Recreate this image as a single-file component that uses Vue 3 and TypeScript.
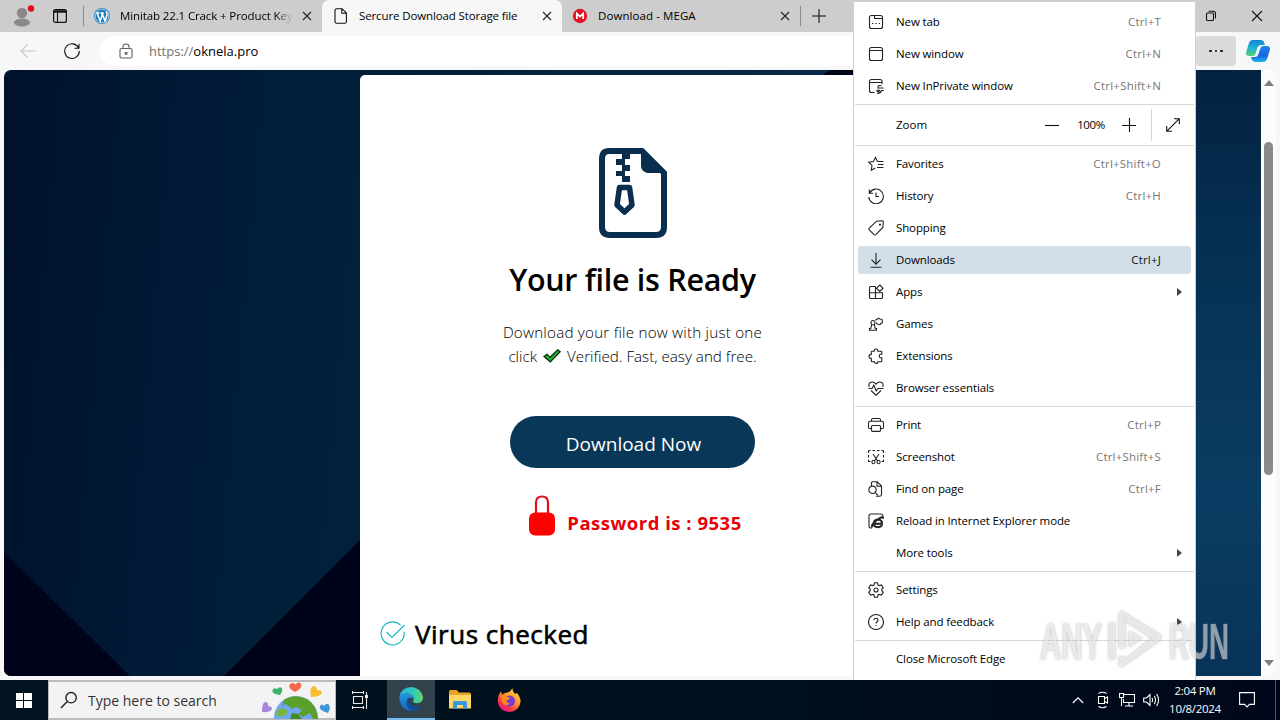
<script setup lang="ts">
interface MenuItem {
	label: string;
	icon?: string;
	keys?: string;
	submenu?: boolean;
	active?: boolean;
}

// icon paths are drawn on a 16x16 grid with a 1px stroke
const groups: MenuItem[][] = [
	[
		{ label: 'Favorites', keys: 'Ctrl+Shift+O', icon: 'M9.5 5.5L7.5 1.5 5.4 5.5.8 6.2 4 9.4 3.3 14.2 7.3 12M9.5 5.5H15.5M10 8.5H15.5M9 11.5H15.5' },
		{ label: 'History', keys: 'Ctrl+H', icon: 'M1.3 1.5V5.3H5M1.6 5A7.3 7.3 0 1 1 .8 9M8 4.5V8.5H11' },
		{ label: 'Shopping', icon: 'M8.5 1.2L14 .8Q15.4 .8 15.3 2.2L14.8 7.5 7.8 14.6Q6.9 15.4 6 14.6L1.2 9.8Q.5 9 1.3 8.2ZM11.6 4.2H12.4V5H11.6Z' },
		{ label: 'Downloads', keys: 'Ctrl+J', active: true, icon: 'M8 1V12M3.5 7.7L8 12.2 12.5 7.7M2.5 15.3H13.5' },
		{ label: 'Apps', submenu: true, icon: 'M7.5 2.5H2.5Q1.5 2.5 1.5 3.5V13.5Q1.5 14.5 2.5 14.5H13.5Q14.5 14.5 14.5 13.5V8.8H1.5M7.5 2.5V14.5M11.8 1L15 4.2 11.8 7.4 8.6 4.2Z' },
		{ label: 'Games', icon: 'M1.5 14.3H8.5V12.5H7.3L6.3 8.7Q7.8 7 6.5 5.2 5 3.8 3.5 5.2 2.2 7 3.7 8.7L2.7 12.5H1.5ZM3.5 8.7H6.5M8 4.7Q7.7 3 9.5 3.1 10.5 1.5 12 3 14.8 3.1 14.2 5.2 15 7.2 12.8 7.6 11.4 9.7 10 8 8.3 8 8.5 6.5' },
		{ label: 'Extensions', icon: 'M4 3.2H6.3Q6 1 8 1T9.8 3.2H13Q13.8 3.2 13.8 4V6.3Q11.3 6 11.3 8T13.8 9.8V13Q13.8 13.8 13 13.8H9.9Q10 15.4 8.2 15.4T6.3 13.8H4.2Q3.3 13.8 3.3 13V10.3Q1 10.5 1 8.5T3.3 6.4V4Q3.3 3.2 4 3.2Z' },
		{ label: 'Browser essentials', icon: 'M1.4 7Q-.2 3.5 2.7 2.2 5.9 1.2 8 4.2 10.1 1.2 13.3 2.2 16.2 3.5 14.6 7M.5 8.5H4L5.8 5.3 8.2 11 10 8.5H15.5M3 10.5L8 15.2 13 10.5' },
	],
	[
		{ label: 'Print', keys: 'Ctrl+P', icon: 'M3.5 4V2.8Q3.5 1.5 4.8 1.5H11.2Q12.5 1.5 12.5 2.8V4M3.5 11.5H1.6Q.5 11.5 .5 10.4V6Q.5 4.2 2.3 4.2H13.7Q15.5 4.2 15.5 6V10.4Q15.5 11.5 14.4 11.5H12.5M4.5 8.5H11.5Q12.5 8.5 12.5 9.5V13.3Q12.5 14.4 11.4 14.4H4.6Q3.5 14.4 3.5 13.3V9.5Q3.5 8.5 4.5 8.5Z' },
		{ label: 'Screenshot', keys: 'Ctrl+Shift+S', icon: 'M.5 4V2.5Q.5 1.5 1.5 1.5H2.5M4.5 1.5H7M9 1.5H11.5M13.5 1.5H14.5Q15.5 1.5 15.5 2.5V4M.5 6V8.5M15.5 6V8.5M.5 10.5V12.5H2.5M15.5 10.5V12.5H13.5M5 5L9.6 12M11 5L6.4 12M6.8 13A1.4 1.4 0 1 1 4.1 13 1.4 1.4 0 1 1 6.8 13M11.9 13A1.4 1.4 0 1 1 9.2 13 1.4 1.4 0 1 1 11.9 13' },
		{ label: 'Find on page', keys: 'Ctrl+F', icon: 'M3.5 4.5V1.7Q3.5 .7 4.5 .7H9.2L13.5 5V13.5Q13.5 15.3 11.5 15.3H8M9 .8V5.2H13.4M8.2 8.8A3.7 3.7 0 1 1 .8 8.8 3.7 3.7 0 1 1 8.2 8.8M7.2 11.5L10 14.3' },
		{ label: 'Reload in Internet Explorer mode', icon: 'ie' },
		{ label: 'More tools', submenu: true },
	],
	[
		{ label: 'Settings', icon: 'M6.5 .8H9.5L10 3 11.2 3.6 13.4 3 15.3 5.6 13.8 7.3V8.7L15.3 10.4 13.4 13 11.2 12.4 10 13 9.5 15.2H6.5L6 13 4.8 12.4 2.6 13 .7 10.4 2.2 8.7V7.3L.7 5.6 2.6 3 4.8 3.6 6 3ZM10 8A2 2 0 1 1 6 8 2 2 0 1 1 10 8' },
		{ label: 'Help and feedback', submenu: true, icon: 'M15.5 8A7.5 7.5 0 1 1 .5 8 7.5 7.5 0 1 1 15.5 8M6 6.3Q6 4.3 8 4.3T10 6.2C10 7.8 8 7.8 8 9.6M8 11V12' },
	],
	[{ label: 'Close Microsoft Edge' }],
];

const topItems: MenuItem[] = [
	{ label: 'New tab', keys: 'Ctrl+T', icon: 'M3.5 1.5H12.5Q14.5 1.5 14.5 3.5V12.5Q14.5 14.5 12.5 14.5H3.5Q1.5 14.5 1.5 12.5V3.5Q1.5 1.5 3.5 1.5M6.5 1.5V4.5H14.5M4 9.5H5.3M7.4 9.5H8.7M10.8 9.5H12' },
	{ label: 'New window', keys: 'Ctrl+N', icon: 'M3.5 1.5H12.5Q14.5 1.5 14.5 3.5V12.5Q14.5 14.5 12.5 14.5H3.5Q1.5 14.5 1.5 12.5V3.5Q1.5 1.5 3.5 1.5M1.5 4.5H14.5' },
	{ label: 'New InPrivate window', keys: 'Ctrl+Shift+N', icon: 'M6.5 14.5H3.5Q1.5 14.5 1.5 12.5V3.5Q1.5 1.5 3.5 1.5H12Q14 1.5 14 3.5V6M1.5 4.5H14M13.5 7.5H11.5Q10 7.5 10 9V10H15.5M9 12.2H11.5Q11.5 13.6 10 13.6 8.6 13.6 9 12.2M15.8 12.5H13.5Q12.5 15.8 9 15.3' },
];

const menu: MenuItem[][] = [topItems, ...groups];
</script>

<template>
	<div class="desktop">
		<div class="tabstrip">
			<svg class="avatar" viewBox="0 0 24 24">
				<circle cx="10" cy="9" r="5.2" fill="#8b8987" />
				<ellipse cx="10" cy="18.5" rx="8" ry="4" fill="#8b8987" />
				<circle cx="19" cy="4.5" r="3.2" fill="#e00b1c" />
			</svg>
			<svg class="workspaces" viewBox="0 0 14 14" fill="none" stroke="#111">
				<rect x=".6" y=".6" width="12.8" height="12.8" rx="2" stroke-width="1.2" />
				<path d="M1 2.5H13" stroke-width="2.4" />
				<path d="M4.5 3V13" />
			</svg>
			<i class="divider first"></i>
			<div class="tab wp">
				<svg class="favicon" viewBox="0 0 16 16">
					<circle cx="8" cy="8" r="8" fill="#1d7cb6" />
					<circle cx="8" cy="8" r="6.9" fill="none" stroke="#d8eaf4" stroke-width=".8" />
					<path d="M2.2 5H5.5M3 5L6.2 13 8.2 7 7.4 5M6.5 5H9.8M8 5L11 13 13 7Q13.5 5 12 3.5" fill="none" stroke="#fff" stroke-width="1.5" />
				</svg>
				<span class="title faded">Minitab 22.1 Crack + Product Key</span>
				<svg class="close" viewBox="0 0 10 10"><path d="M1 1L9 9M9 1L1 9" /></svg>
			</div>
			<div class="tab current">
				<svg class="favicon" viewBox="0 0 16 16" fill="none" stroke="#111" stroke-width="1.2">
					<path d="M3.7 .7H9L13.4 5V13.5Q13.4 15.3 11.7 15.3H3.7Q2 15.3 2 13.5V2.4Q2 .7 3.7 .7ZM8.8 1V5.2H13.2" />
				</svg>
				<span class="title">Sercure Download Storage file</span>
				<svg class="close" viewBox="0 0 10 10"><path d="M1 1L9 9M9 1L1 9" /></svg>
			</div>
			<div class="tab mega">
				<svg class="favicon" viewBox="0 0 16 16">
					<circle cx="8" cy="8" r="7.2" fill="#df1424" />
					<path d="M4.8 11V5.5L8 8.6 11.2 5.5V11" fill="none" stroke="#fff" stroke-width="1.7" />
				</svg>
				<span class="title">Download - MEGA</span>
				<svg class="close" viewBox="0 0 10 10"><path d="M1 1L9 9M9 1L1 9" /></svg>
			</div>
			<i class="divider"></i>
			<svg class="plus" viewBox="0 0 14 14"><path d="M7 0V14M0 7H14" /></svg>
			<div class="window-buttons">
				<svg viewBox="0 0 12 12"><path d="M1.5 4Q1.5 3 2.5 3H7.5Q8.5 3 8.5 4V9.5Q8.5 10.5 7.5 10.5H2.5Q1.5 10.5 1.5 9.5ZM3.5 1.2H8.3Q10.5 1.2 10.5 3.5V8.5" /></svg>
				<svg viewBox="0 0 12 12"><path d="M1 1L11 11M11 1L1 11" /></svg>
			</div>
		</div>

		<div class="toolbar">
			<svg class="back" viewBox="0 0 16 16"><path d="M16 8H1M7.5 1.5L1 8 7.5 14.5" /></svg>
			<svg class="reload" viewBox="0 0 16 16"><path d="M14.6 5A7.3 7.3 0 1 0 15.3 8M15 .8V5.2H10.5" /></svg>
			<div class="address">
				<svg class="padlock" viewBox="0 0 14 16">
					<path d="M2.5 5.5H11.5Q13 5.5 13 7V13.5Q13 15 11.5 15H2.5Q1 15 1 13.5V7Q1 5.5 2.5 5.5ZM4 5.5V3.7Q4 1 7 1T10 3.7V5.5" />
					<rect x="6.3" y="9.6" width="1.6" height="1.6" />
				</svg>
				<span class="scheme">https://</span><span>oknela.pro</span>
			</div>
			<div class="more"><i></i><i></i><i></i></div>
			<svg class="copilot" viewBox="0 0 24 24">
				<defs>
					<linearGradient id="cpl" x1="0" y1="0" x2="0" y2="1"><stop offset="0" stop-color="#1482d8" /><stop offset=".5" stop-color="#20b5d0" /><stop offset="1" stop-color="#55d477" /></linearGradient>
					<linearGradient id="cpr" x1="0" y1="0" x2="0" y2="1"><stop offset="0" stop-color="#2385f0" /><stop offset=".6" stop-color="#1866dd" /><stop offset="1" stop-color="#21b6e8" /></linearGradient>
				</defs>
				<path d="M7 1H15Q17.5 1 18.3 3.7L19 6H15Q12.5 6 11.7 8.5L9.5 15Q8.8 17 6.5 17H3Q-1 17 .3 12.5L3 4Q4 1 7 1Z" fill="url(#cpl)" />
				<path d="M17 23H9Q6.5 23 5.7 20.3L5 18H9Q11.5 18 12.3 15.5L14.5 9Q15.2 7 17.5 7H21Q25 7 23.7 11.5L21 20Q20 23 17 23Z" fill="url(#cpr)" />
				<path d="M12 7.8H14.2L11.6 16H9.5Z" fill="#f5fbff" />
			</svg>
		</div>

		<div class="viewport">
			<div class="page">
				<svg class="backdrop" viewBox="4 70 1257 606" preserveAspectRatio="none">
					<defs>
						<linearGradient id="bgl" x1="0" y1="0" x2="1" y2=".15"><stop offset="0" stop-color="#00112a" /><stop offset=".5" stop-color="#011a35" /><stop offset="1" stop-color="#02203b" /></linearGradient>
						<linearGradient id="bgt" x1="0" y1="0" x2="1" y2="0"><stop offset="0" stop-color="#021d37" /><stop offset="1" stop-color="#0b2949" /></linearGradient>
						<linearGradient id="bgr" x1="0" y1="0" x2="0" y2="1"><stop offset="0" stop-color="#042242" /><stop offset=".3" stop-color="#053052" /><stop offset=".7" stop-color="#0a3d63" /><stop offset="1" stop-color="#083359" /></linearGradient>
					</defs>
					<rect x="4" y="70" width="357" height="606" fill="url(#bgl)" />
					<rect x="360" y="70" width="500" height="606" fill="url(#bgt)" />
					<rect x="860" y="70" width="401" height="606" fill="url(#bgr)" />
					<path d="M4 552L130 676H4ZM361 539L224 676H361Z" fill="#00041a" />
					<path d="M829 70L822 76H860V70Z" fill="#000515" />
				</svg>
				<div class="panel">
					<svg class="zip" viewBox="0 0 68 90">
						<path d="M10 3H43L65 25V79Q65 87 57 87H11Q3 87 3 79V11Q3 3 10 3Z" fill="none" stroke="#0a2f4e" stroke-width="6" />
						<path d="M42 2L67 25H48Q42 23 42 18Z" fill="#0a2f4e" />
						<path d="M23 6H31V11H23ZM17 11H23V17H17ZM23 17H31V23H23ZM17 23H23V28H17ZM23 28H31V34H23ZM23 11H26V34H23Z" fill="#0a2f4e" />
						<path d="M20.5 39.5H30.5L33 57 25.5 64 18 57Z" fill="none" stroke="#0a2f4e" stroke-width="5.5" stroke-linejoin="round" />
					</svg>
					<h1>Your file is Ready</h1>
					<p class="lead">
						<span class="line one">Download your file now with just one</span>
						<span class="line two">click
							<svg class="tick" viewBox="0 0 18 14"><path d="M1 7.5L4 5.2 7 8.3 14.8 .8 17.2 2.7 7.3 13Z" fill="#25b436" stroke="#062606" stroke-width="1.2" /></svg>
							Verified. Fast, easy and free.</span>
					</p>
					<button class="download"><span>Download Now</span></button>
					<div class="password">
						<svg viewBox="0 0 26 41">
							<path d="M7 19V7.5Q7 1.5 13 1.5T19 7.5V19" fill="none" stroke="#e0101a" stroke-width="2.2" />
							<rect y="17.5" width="26" height="23" rx="6" fill="#f00" />
						</svg>
						<span>Password is : 9535</span>
					</div>
					<div class="virus">
						<svg viewBox="0 0 26 26" fill="none" stroke="#12b5bd" stroke-width="1.6"><path d="M20.5 4A11.5 11.5 0 1 0 24 10.5M6.5 11L12 16.5 24.5 4" /></svg>
						<span>Virus checked</span>
					</div>
				</div>
			</div>
			<div class="scrollbar">
				<i class="up"></i>
				<i class="thumb"></i>
				<i class="down"></i>
			</div>
		</div>

		<div class="taskbar">
			<div class="start"><i></i><i></i><i></i><i></i></div>
			<div class="search">
				<svg class="lens" viewBox="0 0 18 18"><path d="M16.3 6.7A5.2 5.2 0 1 1 5.9 6.7 5.2 5.2 0 1 1 16.3 6.7M7.3 10.5L1 17" /></svg>
				<span>Type here to search</span>
				<svg class="earth" viewBox="0 0 72 38">
					<circle cx="36" cy="37" r="22" fill="#71a8f4" />
					<path d="M24 19Q34 12 47 18 57 25 58 38H53L50 32 43 36 38 33 42 29 36 26 32 28 26 23 22 25Z" fill="#5ba02b" />
					<path d="M30 38L32 32 38 33 42 38Z" fill="#438c25" />
					<path d="M17 29L23 27 28 30 26 34 19 36 16 33Z" fill="#78b541" />
					<path d="M35 11Q27 7 30 3 33 1 35 3.5 39 0 41 3 43 7 35 11Z" fill="#f3674b" />
					<path d="M20 14Q11 13 12.5 9 14 6 17 8 20 5 22 7.5 23 10 20 14Z" fill="#3eb16a" />
					<path d="M51 16Q49 5 54 5 57 6 57 9 62 9 62 12 60 16 51 16Z" fill="#f8be2d" />
					<path d="M2 31Q2 20 6 21 9 22 8 25 12 25 12 28 9 32 2 31Z" fill="#ab85dc" />
					<path d="M68 32Q58 29 60 25 62 22 64 25 67 21 69 24 71 27 68 32Z" fill="#3f96d7" />
				</svg>
			</div>
			<div class="task">
				<svg class="taskview" viewBox="0 0 16 18"><path d="M.5 1.5H11.5M.5 0V3M11.5 0V3M1.5 5.5H10.5V12.5H1.5ZM.5 16.5H11.5M.5 15V18M11.5 15V18M14.5 1V18" /><path d="M13 5.5H16" stroke-width="3" /></svg>
			</div>
			<div class="task running">
				<svg class="edge" viewBox="0 0 24 24">
					<defs>
						<linearGradient id="ed1" x1="0" y1="0" x2="1" y2="0"><stop offset="0" stop-color="#2aafe7" /><stop offset=".6" stop-color="#30c8b8" /><stop offset="1" stop-color="#64d865" /></linearGradient>
						<linearGradient id="ed2" x1="0" y1="0" x2="0" y2="1"><stop offset="0" stop-color="#2595dd" /><stop offset="1" stop-color="#1067bd" /></linearGradient>
					</defs>
					<path d="M.5 10Q2 0 12.5 0 22 1 24 10 24 16 18 16.3 13 16.3 14.3 13.5 16 8 9 6.5 3 6.5 .5 10Z" fill="url(#ed1)" />
					<path d="M.3 10Q3 6 8 6.5 14 7 14.5 11 9 10 9 14.5 10 21 17 20.5 20 20.3 22 18.5 18 24 12 24 1 23 .3 10Z" fill="url(#ed2)" />
					<path d="M9 10.5Q5 17 11.5 23.5 18.5 24 22 18.7 16 21 12 17.8 8.3 15 10.3 11Z" fill="#114c94" />
				</svg>
			</div>
			<div class="task">
				<svg class="folder" viewBox="0 0 22 20">
					<path d="M0 1.5Q0 0 1.5 0H7.5L10 2.5H20.5Q22 2.5 22 4V18H0Z" fill="#e8a526" />
					<path d="M0 5H22V18.5H0Z" fill="#ffd766" />
					<path d="M4 19V12.5Q4 11 5.5 11H16.5Q18 11 18 12.5V19H14V15H8V19Z" fill="#3a98de" />
				</svg>
			</div>
			<div class="task">
				<svg class="firefox" viewBox="0 0 24 24">
					<defs><linearGradient id="ff" x1=".9" y1="0" x2=".2" y2="1"><stop offset="0" stop-color="#ffe14a" /><stop offset=".45" stop-color="#ff9428" /><stop offset=".75" stop-color="#f8334f" /><stop offset="1" stop-color="#e31587" /></linearGradient></defs>
					<path d="M15.5 0Q15 3 18 6L20 5Q24 10 23.5 14 22 23.5 12 24 1.5 23 .8 13 .8 7 4 3.5L5 6.5 8 5Q13 5 15.5 0Z" fill="url(#ff)" />
					<circle cx="12.5" cy="13" r="5.6" fill="#7a3ad0" />
					<path d="M4 7.5Q8 6 10.5 9L13.5 10Q12 12 9.5 12.3 9.5 15.5 13 15.2 8 20 5 14Z" fill="#ff8a1e" />
				</svg>
			</div>
			<div class="tray">
				<svg class="chev" viewBox="0 0 12 8"><path d="M.8 7L6 1.8 11.2 7" /></svg>
				<svg class="cam" viewBox="0 0 14 18"><path d="M2.5 2.5Q6.5 0 10.5 2.5M2.5 15.5Q6.5 18 10.5 15.5M2.5 5.5H8.5V12.5H2.5ZM8.5 7.5L11.5 6V12L8.5 10.5" /></svg>
				<svg class="net" viewBox="0 0 16 14"><path d="M5 1.5H15.5V9.5H4.5V6M10 9.5V13M6 13H14M.5 .5H4.5V4.5H.5ZM2.5 4.5V13" /></svg>
				<svg class="vol" viewBox="0 0 17 14"><path d="M.7 5H3.5L7 1.5V12.5L3.5 9H.7ZM9 5Q10.3 7 9 9M11.3 3Q13.8 7 11.3 11M13.6 1Q17.6 7 13.6 13" /></svg>
				<div class="clock"><span>2:04 PM</span><span>10/8/2024</span></div>
				<svg class="notify" viewBox="0 0 16 16"><path d="M.6 .6H15.4V12.4H10.5L8 15 5.5 12.4H.6Z" /></svg>
				<i class="peek"></i>
			</div>
		</div>

		<div class="menu">
			<template v-for="(group, g) in menu" :key="g">
				<div v-if="g > 0" class="sep"></div>
				<template v-if="g === 1">
					<div class="zoom-row">
						<span class="zoom-label">Zoom</span>
						<svg viewBox="0 0 14 14"><path d="M0 7.5H14" /></svg>
						<span class="percent">100%</span>
						<svg viewBox="0 0 14 14"><path d="M0 7.5H14M7.5 0V14" /></svg>
						<i></i>
						<svg viewBox="0 0 14 14"><path d="M.7 13.3L13.3 .7M8 .7H13.3V6M.7 8V13.3H6" /></svg>
					</div>
					<div class="sep"></div>
				</template>
				<div v-for="item in group" :key="item.label" :class="['item', { active: item.active }]">
					<svg v-if="item.icon === 'ie'" class="icon" viewBox="0 0 16 16">
						<path d="M4 15H2.5Q1 15 1 13V3Q1 1 3 1H12.5Q15 1 15 3V5" />
						<path d="M14.2 12Q12.8 14.2 10 14.2 5.8 14 5.8 10.2 6.2 6.5 10 6.5 14.2 6.8 14 10.7H7M4.5 14.3Q2.5 12 9 7T14.8 5.8" stroke-width="2" />
					</svg>
					<svg v-else class="icon" viewBox="0 0 16 16"><path v-if="item.icon" :d="item.icon" /></svg>
					<span class="label">{{ item.label }}</span>
					<span v-if="item.keys" class="keys">{{ item.keys }}</span>
					<i v-if="item.submenu" class="arrow"></i>
				</div>
			</template>
		</div>

		<svg class="watermark" viewBox="0 0 200 70">
			<text x="5" y="53" textLength="62" lengthAdjust="spacingAndGlyphs">ANY</text>
			<text x="134" y="53" textLength="60" lengthAdjust="spacingAndGlyphs">RUN</text>
			<path d="M74 17H80V53H74ZM84 8Q84 4 88 6L124 28Q128 32 124 35L88 60Q84 62 84 57V51H90V53L117 32 90 15V42H84Z" />
			<path d="M94 25L107 32 94 41Z" />
		</svg>
	</div>
</template>

<style>
	body {
		margin: 0;
		overflow: hidden;
	}
</style>

<style scoped>
	.desktop {
		position: relative;
		display: flex;
		flex-direction: column;
		width: 1280px;
		height: 720px;
		overflow: hidden;
		background: #f7f7f7;
		color: #000;
		font-family: "Open Sans", "Noto Sans", sans-serif;
		font-size: 12px;
	}
	svg {
		display: block;
		flex: none;
		fill: none;
		stroke-width: 1.1;
	}
	span {
		white-space: nowrap;
	}

	.tabstrip {
		display: flex;
		align-items: center;
		height: 32px;
		flex: none;
		background: #cdcdcd;
	}
		.avatar {
			width: 24px;
			height: 24px;
			margin: 0 0 0 12px;
		}
		.workspaces {
			width: 14px;
			height: 14px;
			margin-left: 17px;
		}
		.divider {
			width: 1px;
			height: 20px;
			background: #8d8984;
		}
			.divider.first {
				margin-left: 16px;
			}
		.tab {
			display: flex;
			align-items: center;
			box-sizing: border-box;
			width: 238px;
			height: 32px;
			padding: 0 10px;
		}
			.tab.current {
				width: 240px;
				padding-left: 11px;
				background: #f7f7f7;
				border-radius: 7px 7px 0 0;
			}
			.favicon {
				width: 16px;
				height: 16px;
			}
			.title {
				flex: 1;
				overflow: hidden;
				margin-left: 10px;
				padding-bottom: 2px;
				font-size: 11.5px;
				letter-spacing: -0.12px;
			}
				.mega .title {
					letter-spacing: 0.08px;
				}
				.faded {
					-webkit-mask-image: linear-gradient(90deg, #000 90%, transparent);
					mask-image: linear-gradient(90deg, #000 90%, transparent);
				}
			.close {
				width: 10px;
				height: 10px;
				stroke: #222;
				margin-left: 9px;
			}
		.plus {
			width: 14px;
			height: 14px;
			margin-left: 11px;
			stroke: #111;
		}
		.window-buttons {
			display: flex;
			gap: 34px;
			margin-left: auto;
			padding-right: 17px;
			stroke: #111;
		}
			.window-buttons svg {
				width: 12px;
				height: 12px;
			}

	.toolbar {
		display: flex;
		align-items: center;
		flex: none;
		height: 38px;
	}
		.back, .reload {
			width: 16px;
			height: 16px;
		}
		.back {
			margin-left: 20px;
			stroke: #c8c8c8;
		}
		.reload {
			margin-left: 28px;
			stroke: #111;
		}
		.address {
			display: flex;
			align-items: center;
			flex: 1;
			height: 30px;
			margin: 0 24px 0 20px;
			padding-left: 19px;
			border-radius: 15px 0 0 15px;
			background: #fff;
			font-size: 13px;
		}
			.padlock {
				width: 14px;
				height: 16px;
				margin-right: 16px;
				stroke: #606060;
			}
			.scheme {
				color: #707070;
			}
		.more {
			display: flex;
			align-items: center;
			justify-content: center;
			gap: 3px;
			width: 40px;
			height: 30px;
			border-radius: 4px;
			background: #dadada;
		}
			.more i {
				width: 2.5px;
				height: 2.5px;
				border-radius: 50%;
				background: #111;
			}
		.copilot {
			width: 24px;
			height: 24px;
			margin: 0 10px;
		}

	.viewport {
		display: flex;
		flex: none;
		height: 606px;
		margin: 0 4px 4px;
		border-radius: 7px;
		overflow: hidden;
		background: #fcfcfc;
	}
		.page {
			position: relative;
			width: 1257px;
		}
			.backdrop {
				position: absolute;
				inset: 0;
				width: 1257px;
				height: 606px;
			}
			.panel {
				position: relative;
				display: flex;
				flex-direction: column;
				align-items: center;
				box-sizing: border-box;
				width: 545px;
				height: 601px;
				margin: 5px 0 0 356px;
				padding-top: 73px;
				border-radius: 5px 5px 0 0;
				background: #fff;
			}
				.zip {
					width: 68px;
					height: 90px;
				}
				h1 {
					margin: 21px 0 0;
					font-size: 30.5px;
					font-weight: 600;
					line-height: 40px;
					letter-spacing: -0.3px;
					color: #000;
					white-space: nowrap;
				}
				.lead {
					display: flex;
					flex-direction: column;
					align-items: center;
					margin: 21px 0 0;
					font-size: 15.2px;
					font-weight: 300;
					line-height: 24px;
					color: #000;
				}
					.line {
						display: flex;
						align-items: center;
						gap: 6px;
					}
						.line.one {
							letter-spacing: 0.22px;
						}
					.tick {
						width: 18px;
						height: 14px;
					}
				.download {
					width: 245px;
					height: 52px;
					margin-top: 48px;
					padding: 3px 0 0 2px;
					border: 0;
					border-radius: 26px;
					background: #083757;
					color: #fff;
					font: 19px "Open Sans", sans-serif;
				}
				.password {
					display: flex;
					gap: 12px;
					height: 41px;
					margin-top: 27px;
					padding-left: 6px;
					font-size: 18.5px;
					font-weight: 700;
					line-height: 56px;
					letter-spacing: 0.5px;
					color: #e60008;
				}
					.password svg {
						width: 26px;
						height: 41px;
					}
				.virus {
					display: flex;
					align-items: center;
					align-self: flex-start;
					gap: 9px;
					margin: 78px 0 0 20px;
					font-size: 26px;
					line-height: 40px;
					letter-spacing: 0.5px;
					color: #000;
				}
					.virus span {
						-webkit-text-stroke: 0.6px #000;
					}
					.virus svg {
						width: 26px;
						height: 26px;
					}
		.scrollbar {
			display: flex;
			flex-direction: column;
			align-items: center;
			width: 15px;
		}
			.up, .down {
				border: 5px solid transparent;
			}
			.up {
				margin-top: 10px;
				border-top-width: 0;
				border-bottom: 6px solid #808080;
			}
			.thumb {
				width: 9px;
				height: 333px;
				margin-top: 56px;
				border-radius: 5px;
				background: #8a8a8a;
			}
			.down {
				margin-top: 185px;
				border-top: 6px solid #808080;
				border-bottom-width: 0;
			}

	.taskbar {
		display: flex;
		flex: none;
		height: 40px;
		background: linear-gradient(90deg, #00131e 0%, #00101c 60%, #00071a 100%);
	}
		.start {
			display: grid;
			grid-template-columns: 7px 8px;
			grid-template-rows: 7px 7px;
			gap: 1px;
			place-content: center;
			width: 48px;
		}
			.start i {
				background: #fff;
			}
		.search {
			display: flex;
			align-items: center;
			box-sizing: border-box;
			width: 288px;
			height: 40px;
			border: 1px solid #b9bcbd;
			border-width: 2px 1px;
			background: #f3f3f3;
			color: #333;
			font-size: 14px;
		}
			.lens {
				width: 18px;
				height: 18px;
				margin: 0 10px 0 11px;
				stroke: #222;
				stroke-width: 1.4;
			}
			.earth {
				width: 72px;
				height: 38px;
				margin-left: auto;
				margin-right: 3px;
			}
		.task {
			display: flex;
			align-items: center;
			justify-content: center;
			width: 49px;
		}
			.running {
				box-sizing: border-box;
				width: 48px;
				margin-left: 2px;
				background: #31424c;
				border-bottom: 2px solid #76b9ed;
			}
			.taskview {
				width: 16px;
				height: 18px;
				margin-right: 1px;
				stroke: #e8e8e8;
			}
			.edge {
				width: 24px;
				height: 24px;
			}
			.folder {
				width: 22px;
				height: 20px;
			}
			.firefox {
				width: 24px;
				height: 24px;
			}
		.tray {
			display: flex;
			align-items: center;
			margin-left: auto;
			stroke: #fff;
			color: #fff;
		}
			.chev {
				width: 12px;
				height: 8px;
			}
			.cam {
				width: 14px;
				height: 18px;
				margin-left: 12px;
			}
			.net {
				width: 16px;
				height: 14px;
				margin-left: 9px;
			}
			.vol {
				width: 17px;
				height: 14px;
				margin-left: 8px;
			}
			.clock {
				display: flex;
				flex-direction: column;
				align-items: center;
				width: 54px;
				margin-left: 8px;
				font-size: 11.5px;
				line-height: 18px;
				letter-spacing: -0.3px;
			}
			.notify {
				width: 16px;
				height: 16px;
				margin-left: 17px;
			}
			.peek {
				width: 1px;
				height: 40px;
				margin: 0 4px 0 20px;
				background: #4c5661;
			}

	.menu {
		position: absolute;
		left: 853px;
		top: 1px;
		display: flex;
		flex-direction: column;
		box-sizing: border-box;
		width: 343px;
		height: 679px;
		padding-top: 4px;
		border: 1px solid #d0d0d0;
		border-bottom: 0;
		background: #fff;
	}
		.item {
			display: flex;
			flex: none;
			align-items: center;
			box-sizing: border-box;
			height: 28px;
			margin: 2px 4px;
			padding: 0 30px 0 10px;
			border-radius: 3px;
			font-size: 11.5px;
			letter-spacing: -0.12px;
		}
			.item.active {
				background: #d3dfe8;
			}
			.icon {
				width: 16px;
				height: 16px;
				margin-right: 12px;
				stroke: #222;
			}
			.label, .keys {
				padding-bottom: 2px;
			}
			.keys {
				margin-left: auto;
				color: #777;
				letter-spacing: 0.2px;
			}
				.active .keys {
					color: #111;
				}
			.arrow {
				margin-left: auto;
				margin-right: -21px;
				border: 4px solid transparent;
				border-left: 5px solid #444;
				border-right: 0;
			}
		.sep {
			flex: none;
			height: 1px;
			margin: 2px 1px;
			background: #d8d8d8;
		}
		.zoom-row {
			display: flex;
			flex: none;
			align-items: center;
			height: 36px;
			padding-left: 42px;
			font-size: 11.5px;
		}
			.zoom-row svg {
				width: 14px;
				height: 14px;
				stroke: #111;
			}
			.zoom-label {
				width: 149px;
				padding-bottom: 2px;
			}
			.percent {
				width: 46px;
				margin: 0 8px 0 9px;
				padding-bottom: 2px;
				text-align: center;
				letter-spacing: -0.4px;
			}
			.zoom-row i {
				width: 1px;
				height: 32px;
				margin: 0 14px 0 15px;
				background: #d8d8d8;
			}

	.watermark {
		position: absolute;
		left: 1035px;
		top: 606px;
		width: 200px;
		height: 70px;
		overflow: visible;
		font: 700 50px "Liberation Sans", sans-serif;
		fill: rgba(255, 255, 255, 0.5);
		stroke: rgba(190, 190, 190, 0.35);
		stroke-width: 0.6;
		filter: drop-shadow(0 0 1.5px rgba(90, 90, 90, 0.6));
	}
</style>
